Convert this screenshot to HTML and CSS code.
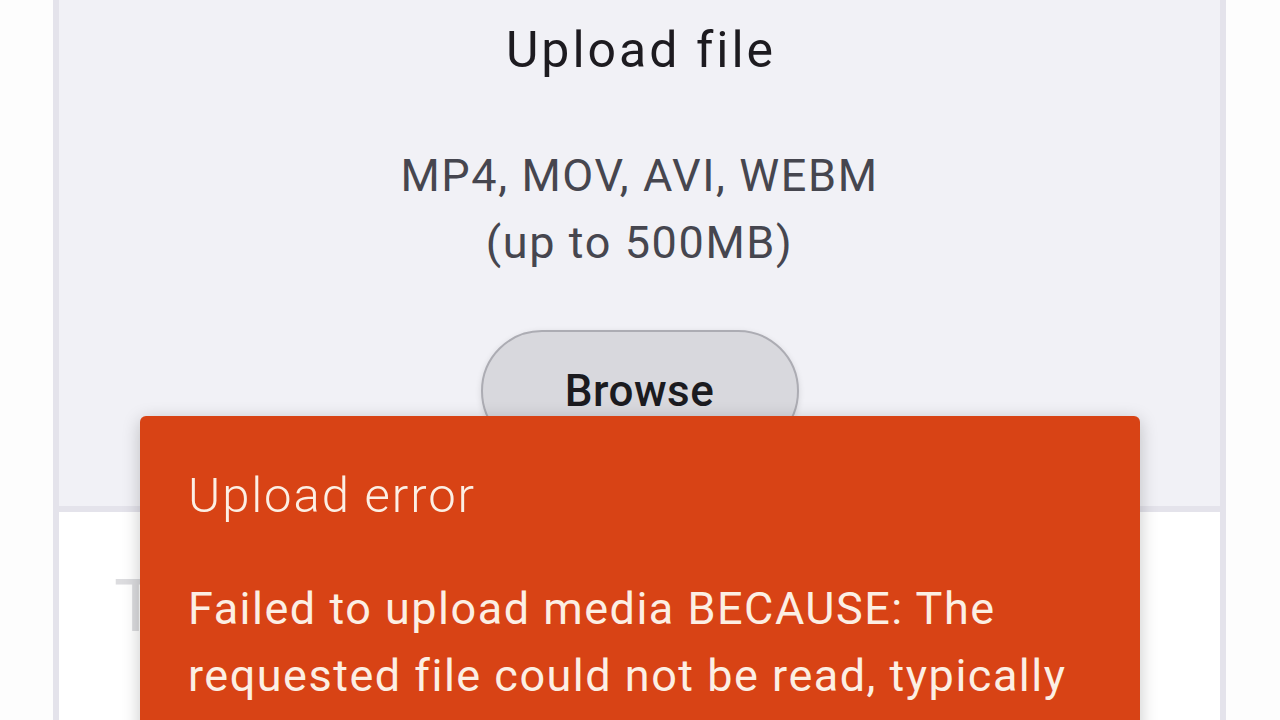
FILE: index.html
```html
<!DOCTYPE html>
<html lang="en">
<head>
<meta charset="utf-8">
<title>Upload file</title>
<link rel="stylesheet" href="styles.css">
</head>
<body>
<div class="frame">
  <section class="upload">
    <h1 class="upload-title">Upload file</h1>
    <p class="upload-sub">MP4, MOV, AVI, WEBM<br>(up to 500MB)</p>
    <button class="browse" type="button">Browse</button>
  </section>
  <section class="details">
    <div class="placeholder">Title</div>
  </section>
</div>
<div class="toast" role="alert">
  <div class="toast-title">Upload error</div>
  <div class="toast-body">Failed to upload media BECAUSE: The requested file could not be read, typically due to permission problems that have occurred after a reference to a file was acquired.</div>
</div>
</body>
</html>
```

FILE: styles.css
```css
html, body {
  margin: 0;
  padding: 0;
  height: 720px;
  overflow: hidden;
  background: #fdfdfd;
  font-family: Roboto, "Noto Sans", sans-serif;
}

.frame {
  margin: 0 54px 0 53px;
  height: 720px;
  border-left: 6px solid #e4e3eb;
  border-right: 6px solid #e4e3eb;
  background: #ffffff;
  display: flex;
  flex-direction: column;
}

.upload {
  background: #f1f1f6;
  border-bottom: 6px solid #e4e3eb;
  padding: 20px 0 54px;
  display: flex;
  flex-direction: column;
  align-items: center;
}

.upload-title {
  margin: 0;
  font-size: 50px;
  line-height: 60px;
  font-weight: 400;
  letter-spacing: 3px;
  text-indent: 3px;
  color: #1d1b20;
}

.upload-sub {
  margin: 62px 0 0;
  font-size: 45px;
  line-height: 67px;
  letter-spacing: 1.6px;
  text-align: center;
  color: #46464f;
}

.browse {
  margin-top: 54px;
  width: 318px;
  height: 122px;
  border: 2px solid #acacb3;
  border-radius: 61px;
  background: #d8d8dd;
  box-shadow: 0 2px 6px rgba(0, 0, 0, 0.12);
  font-family: Roboto, "Noto Sans", sans-serif;
  font-size: 44px;
  font-weight: 500;
  letter-spacing: 0.5px;
  color: #1b1b1f;
  padding: 0;
}

.details {
  padding: 50px 0 0 55px;
}

.placeholder {
  font-size: 72px;
  line-height: 90px;
  color: #dcdcdf;
}

.toast {
  position: absolute;
  left: 140px;
  top: 416px;
  width: 1000px;
  height: 400px;
  box-sizing: border-box;
  padding: 46px 48px 0;
  background: #d84315;
  border-radius: 6px;
  box-shadow: 0 4px 18px rgba(0, 0, 0, 0.22);
  color: #fcefe4;
}

.toast-title {
  font-size: 49px;
  line-height: 67px;
  font-weight: 300;
  letter-spacing: 1.9px;
}

.toast-body {
  margin-top: 46px;
  font-size: 45px;
  line-height: 67px;
  font-weight: 400;
  letter-spacing: 1.5px;
}
```
